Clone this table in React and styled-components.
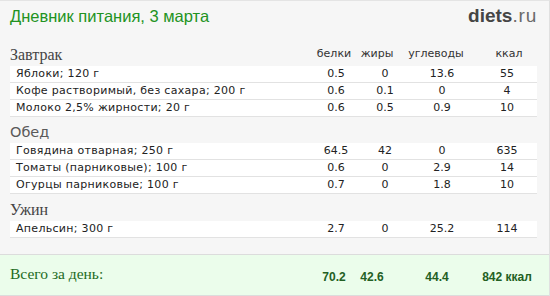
import styled, { createGlobalStyle } from "styled-components";

const GlobalStyle = createGlobalStyle`
  html, body {
    margin: 0;
    padding: 0;
    background: #ffffff;
  }
`;

const Frame = styled.div`
  width: 550px;
  height: 296px;
  box-sizing: border-box;
  background: #f6f6f6;
  border-top: 1px solid #e4e4e4;
  border-right: 1px solid #e0e0e0;
  display: flex;
  flex-direction: column;
  overflow: hidden;
`;

const Header = styled.div`
  height: 39px;
  box-sizing: border-box;
  padding: 0 12px 0 10px;
  display: flex;
  justify-content: space-between;
  align-items: flex-start;
`;

const Title = styled.h1`
  margin: 5px 0 0;
  font-family: "Liberation Sans", Arial, sans-serif;
  font-size: 16.5px;
  font-weight: 400;
  line-height: 20px;
  color: #229322;
`;

const Logo = styled.div`
  margin-top: 4px;
  font-family: "Liberation Sans", Arial, sans-serif;
  font-size: 19px;
  line-height: 22px;
  color: #454545;
  b {
    font-weight: 700;
  }
  span {
    color: #6a6a6a;
    letter-spacing: 0.8px;
  }
`;

const Body = styled.div`
  padding: 0 12px 0 10px;
  display: flex;
  flex-direction: column;
`;

const SectionHead = styled.div`
  height: ${(p) => p.h || 26}px;
  box-sizing: border-box;
  display: flex;
  align-items: flex-end;
  padding-bottom: 2px;
`;

const SectionTitle = styled.div`
  flex: 1;
  font-family: ${(p) =>
    p.sans ? '"DejaVu Sans", Verdana, sans-serif' : '"Liberation Serif", "Times New Roman", serif'};
  font-size: ${(p) => (p.sans ? "14.5px" : "16px")};
  line-height: 18px;
  color: ${(p) => (p.sans ? "#5a5a5a" : "#444444")};
`;

const ColHeads = styled.div`
  display: grid;
  grid-template-columns: 42px 44px 74px 64px;
  margin-bottom: 4px;
  font-family: "DejaVu Sans", Verdana, sans-serif;
  font-size: 11px;
  line-height: 13px;
  color: #333333;
  text-align: center;
`;

const ColHead = styled.div`
  padding-left: ${(p) => p.shift || 0}px;
`;

const Row = styled.div`
  height: 16px;
  background: #ffffff;
  border-bottom: 1px solid #e2e2e2;
  display: grid;
  grid-template-columns: 1fr 54px 44px 70px 60px;
  align-items: center;
  font-family: "DejaVu Sans", Verdana, sans-serif;
  font-size: 11px;
  line-height: 16px;
  color: #222222;
`;

const Name = styled.div`
  padding-left: 6px;
  letter-spacing: 0.3px;
  white-space: nowrap;
`;

const Cell = styled.div`
  text-align: center;
`;

const Spacer = styled.div`
  height: 16px;
`;

const Totals = styled.div`
  height: 42px;
  box-sizing: border-box;
  background: #ebfdeb;
  border-top: 1px solid #dcdcdc;
  border-bottom: 1px solid #dcdcdc;
  padding: 0 12px 0 10px;
  display: grid;
  grid-template-columns: 1fr 26px 50px 80px 60px;
  align-items: baseline;
  padding-top: 10px;
`;

const TotalLabel = styled.div`
  font-family: "Liberation Serif", "Times New Roman", serif;
  font-size: 15.5px;
  line-height: 18px;
  color: #1d6b1d;
`;

const TotalValue = styled.div`
  position: relative;
  top: 2px;
  text-align: center;
  white-space: nowrap;
  font-family: "Liberation Sans", Arial, sans-serif;
  font-size: 12px;
  font-weight: 700;
  color: #236023;
`;

const meals = [
  {
    title: "Завтрак",
    cols: true,
    items: [
      ["Яблоки; 120 г", "0.5", "0", "13.6", "55"],
      ["Кофе растворимый, без сахара; 200 г", "0.6", "0.1", "0", "4"],
      ["Молоко 2,5% жирности; 20 г", "0.6", "0.5", "0.9", "10"],
    ],
  },
  {
    title: "Обед",
    sans: true,
    items: [
      ["Говядина отварная; 250 г", "64.5", "42", "0", "635"],
      ["Томаты (парниковые); 100 г", "0.6", "0", "2.9", "14"],
      ["Огурцы парниковые; 100 г", "0.7", "0", "1.8", "10"],
    ],
  },
  {
    title: "Ужин",
    h: 27,
    items: [["Апельсин; 300 г", "2.7", "0", "25.2", "114"]],
  },
];

export default function App() {
  return (
    <>
      <GlobalStyle />
      <Frame>
        <Header>
          <Title>Дневник питания, 3 марта</Title>
          <Logo>
            <b>diets</b>
            <span>.ru</span>
          </Logo>
        </Header>
        <Body>
          {meals.map((meal) => (
            <div key={meal.title}>
              <SectionHead h={meal.h}>
                <SectionTitle sans={meal.sans}>{meal.title}</SectionTitle>
                {meal.cols && (
                  <ColHeads>
                    <ColHead>белки</ColHead>
                    <ColHead>жиры</ColHead>
                    <ColHead>углеводы</ColHead>
                    <ColHead shift={8}>ккал</ColHead>
                  </ColHeads>
                )}
              </SectionHead>
              {meal.items.map(([name, ...vals]) => (
                <Row key={name}>
                  <Name>{name}</Name>
                  {vals.map((v, i) => (
                    <Cell key={i}>{v}</Cell>
                  ))}
                </Row>
              ))}
            </div>
          ))}
          <Spacer />
        </Body>
        <Totals>
          <TotalLabel>Всего за день:</TotalLabel>
          <TotalValue>70.2</TotalValue>
          <TotalValue>42.6</TotalValue>
          <TotalValue>44.4</TotalValue>
          <TotalValue>842 ккал</TotalValue>
        </Totals>
      </Frame>
    </>
  );
}
